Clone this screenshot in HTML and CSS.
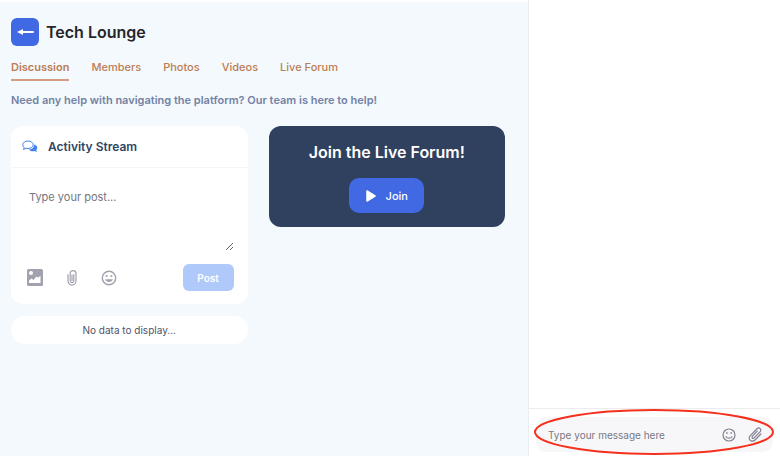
FILE: index.html
```html
<!DOCTYPE html>
<html lang="en">
<head>
  <meta charset="UTF-8">
  <meta name="viewport" content="width=device-width, initial-scale=1.0">
  <title>Tech Lounge</title>
  <link rel="stylesheet" href="styles.css">
</head>
<body>
  <main class="lounge">
    <header class="title-bar">
      <button class="back" type="button" aria-label="Back">
        <svg width="18" height="10" viewBox="0 0 18 10"><path d="M6 5h11" stroke="#fff" stroke-width="2" stroke-linecap="round"/><path d="M7 2v6L1 5z" fill="#fff"/></svg>
      </button>
      <h1>Tech Lounge</h1>
    </header>

    <nav class="tabs">
      <a class="tab active" href="#discussion">Discussion</a>
      <a class="tab" href="#members">Members</a>
      <a class="tab" href="#photos">Photos</a>
      <a class="tab" href="#videos">Videos</a>
      <a class="tab" href="#forum">Live Forum</a>
    </nav>

    <p class="intro">Need any help with navigating the platform? Our team is here to help!</p>

    <div class="columns">
      <section class="stream">
        <div class="card">
          <div class="card-head">
            <svg width="16" height="14" viewBox="0 0 16 14">
              <path d="M12 4.500c2 .5 3.300 1.700 3.300 3.300 0 .9-.4 1.700-1.100 2.300l.8 2-2.400-1c-2.200.5-4.600-.1-5.600-1.700 3.500-.1 5.600-2.400 5-4.900z" fill="#4381f0"/>
              <path d="M6 1C3 1 .8 2.600.8 4.800c0 1.100.5 2 1.400 2.700L1.500 9.500l2.600-1.200c.6.1 1.200.2 1.900.2 3 0 5.200-1.600 5.200-3.700S9 1 6 1z" fill="#fff" stroke="#4381f0" stroke-linejoin="round"/>
            </svg>
            <h2>Activity Stream</h2>
          </div>
          <form class="post-form">
            <textarea class="post-text" aria-label="Post" placeholder="Type your post..."></textarea>
            <div class="post-actions">
              <button class="icon" type="button" aria-label="Add image">
                <svg width="16" height="17" viewBox="0 0 16 17"><rect width="16" height="17" rx="1.500" fill="#a2a2af"/><circle cx="4" cy="4" r="2" fill="#fff"/><path d="M2 14v-2.500L4.500 9.500 6.500 11l3-3.500 1.500 1L13.500 7v7z" fill="#fff"/></svg>
              </button>
              <button class="icon" type="button" aria-label="Attach file">
                <svg width="10" height="16" viewBox="0 0 10 16" fill="none" stroke="#a2a2af" stroke-width="1.200" stroke-linecap="round"><path d="M6.800 4.500v6.300a1.800 1.800 0 0 1-3.600 0V3.500a2.900 2.900 0 0 1 5.800 0v7.600a4 4 0 0 1-8 0V4.500M5 5v5.500"/></svg>
              </button>
              <button class="icon" type="button" aria-label="Add emoji">
                <svg width="16" height="16" viewBox="0 0 16 16"><circle cx="8" cy="8" r="6.700" fill="none" stroke="#a2a2af" stroke-width="1.400"/><circle cx="5.600" cy="6" r="1.100" fill="#a2a2af"/><circle cx="10.400" cy="6" r="1.100" fill="#a2a2af"/><path d="M4.200 9.300h7.600c-.6 1.700-2 2.700-3.800 2.700s-3.200-1-3.800-2.700z" fill="#a2a2af"/></svg>
              </button>
              <button class="post" type="submit" disabled>Post</button>
            </div>
          </form>
        </div>
        <p class="empty">No data to display...</p>
      </section>

      <section class="forum">
        <h2>Join the Live Forum!</h2>
        <button class="join" type="button">
          <svg width="10" height="12" viewBox="0 0 10 12"><path d="M1 1v10l8-5z" fill="#fff" stroke="#fff" stroke-width="1.500" stroke-linejoin="round"/></svg>
          Join
        </button>
      </section>
    </div>
  </main>

  <aside class="chat">
    <form class="composer">
      <div class="message">
        <input type="text" aria-label="Message" placeholder="Type your message here">
        <button class="icon" type="button" aria-label="Add emoji">
          <svg width="14" height="14" viewBox="0 0 14 14" fill="none" stroke="#82828f" stroke-width="1.200" stroke-linecap="round"><circle cx="7" cy="7" r="6"/><path d="M4.900 4.700v.6M9.100 4.700v.6" stroke-width="1.500"/><path d="M4 8.700c1.200 2 4.800 2 6 0"/></svg>
        </button>
        <button class="icon" type="button" aria-label="Attach file">
          <svg width="14" height="15" viewBox="0 0 14 15" fill="none" stroke="#82828f" stroke-width="1.200" stroke-linecap="round"><path d="M12.800 7 7.600 12.500c-3.600 3.700-8.400 0-5.500-3.600L8.800 2c2.500-2.500 5.400.5 3.200 2.900L6.400 10.700c-1.500 1.500-3.200-.2-1.900-1.600L9.300 4.200"/></svg>
        </button>
      </div>
      <svg class="highlight" viewBox="0 0 240 46" preserveAspectRatio="none"><ellipse cx="120" cy="23" rx="119" ry="22" fill="none" stroke="#f5301c" stroke-width="2"/></svg>
    </form>
  </aside>
</body>
</html>
```
FILE: styles.css
```css
* {
  box-sizing: border-box;
}

body {
  margin: 0;
  min-height: 100vh;
  display: flex;
  background: #fff;
  font-family: Inter, "Open Sans", sans-serif;
  font-size: 11px;
  line-height: 16px;
}

h1,
h2,
p {
  margin: 0;
}

button,
input,
textarea {
  font: inherit;
  border: 0;
  padding: 0;
}

svg {
  display: block;
}

.lounge {
  flex: 1;
  padding: 16px 23px 16px 11px;
  border-top: 2px solid #fff;
  background: #f3f9fc;
}

.title-bar {
  display: flex;
  align-items: center;
  gap: 7px;
}

.title-bar h1 {
  font-size: 16px;
  line-height: 28px;
  font-weight: 600;
  color: #252629;
}

.back {
  display: grid;
  place-items: center;
  width: 28px;
  height: 28px;
  border-radius: 6px;
  background: #4169e4;
}

.tabs {
  display: flex;
  gap: 22px;
  margin-top: 13px;
}

.tab {
  padding-bottom: 4px;
  border-bottom: 2px solid transparent;
  color: #bd7d55;
  font-weight: 500;
  text-decoration: none;
}

.tab.active {
  border-color: #d39c7e;
  font-weight: 600;
}

.intro {
  margin-top: 11px;
  color: #7482a5;
  font-weight: 600;
}

.columns {
  display: grid;
  grid-template-columns: 1fr 1fr;
  align-items: start;
  gap: 21px;
  margin-top: 18px;
}

.card {
  border-radius: 12px;
  background: #fff;
}

.card-head {
  display: flex;
  align-items: center;
  gap: 10px;
  height: 42px;
  padding: 0 11px;
  border-bottom: 1px solid #f5f6f8;
}

.card-head h2 {
  font-size: 12px;
  font-weight: 600;
  color: #304564;
}

.post-form {
  padding: 10px 14px 13px 16px;
}

.post-text {
  display: block;
  width: 100%;
  height: 73px;
  padding: 11px 2px;
  resize: vertical;
  background: none;
}

.post-text::placeholder {
  color: #75757f;
  opacity: 1;
}

.post-actions {
  display: flex;
  align-items: center;
  gap: 24px;
  margin-top: 13px;
}

.icon {
  background: none;
}

.post {
  width: 51px;
  height: 27px;
  margin-left: auto;
  border-radius: 6px;
  background: #afc9fb;
  color: #fff;
  font-size: 10px;
  font-weight: 600;
}

.empty {
  margin-top: 12px;
  padding: 6px;
  border-radius: 14px;
  background: #fff;
  color: #505268;
  font-size: 10px;
  text-align: center;
}

.forum {
  display: flex;
  flex-direction: column;
  align-items: center;
  gap: 14px;
  padding: 14px;
  border-radius: 12px;
  background: #30405f;
  color: #fff;
}

.forum h2 {
  font-size: 16px;
  line-height: 24px;
  font-weight: 600;
}

.join {
  display: flex;
  align-items: center;
  justify-content: center;
  gap: 10px;
  width: 75px;
  height: 35px;
  border-radius: 10px;
  background: #4169e4;
  color: #fff;
  font-weight: 500;
}

.chat {
  display: flex;
  flex-direction: column;
  justify-content: flex-end;
  width: 252px;
  border-left: 1px solid #e9edf0;
}

.composer {
  position: relative;
  padding: 8px 7px 4px;
  border-top: 1px solid #ececef;
}

.message {
  display: flex;
  align-items: center;
  gap: 12px;
  height: 35px;
  padding: 0 11px 0 12px;
  border-radius: 10px;
  background: #f7f7fa;
}

.message input {
  flex: 1;
  min-width: 0;
  background: none;
  font-size: 10px;
}

.message input::placeholder {
  color: #777783;
  opacity: 1;
}

.highlight {
  position: absolute;
  top: 0;
  left: 5px;
  width: 240px;
  height: 46px;
  pointer-events: none;
}
```
